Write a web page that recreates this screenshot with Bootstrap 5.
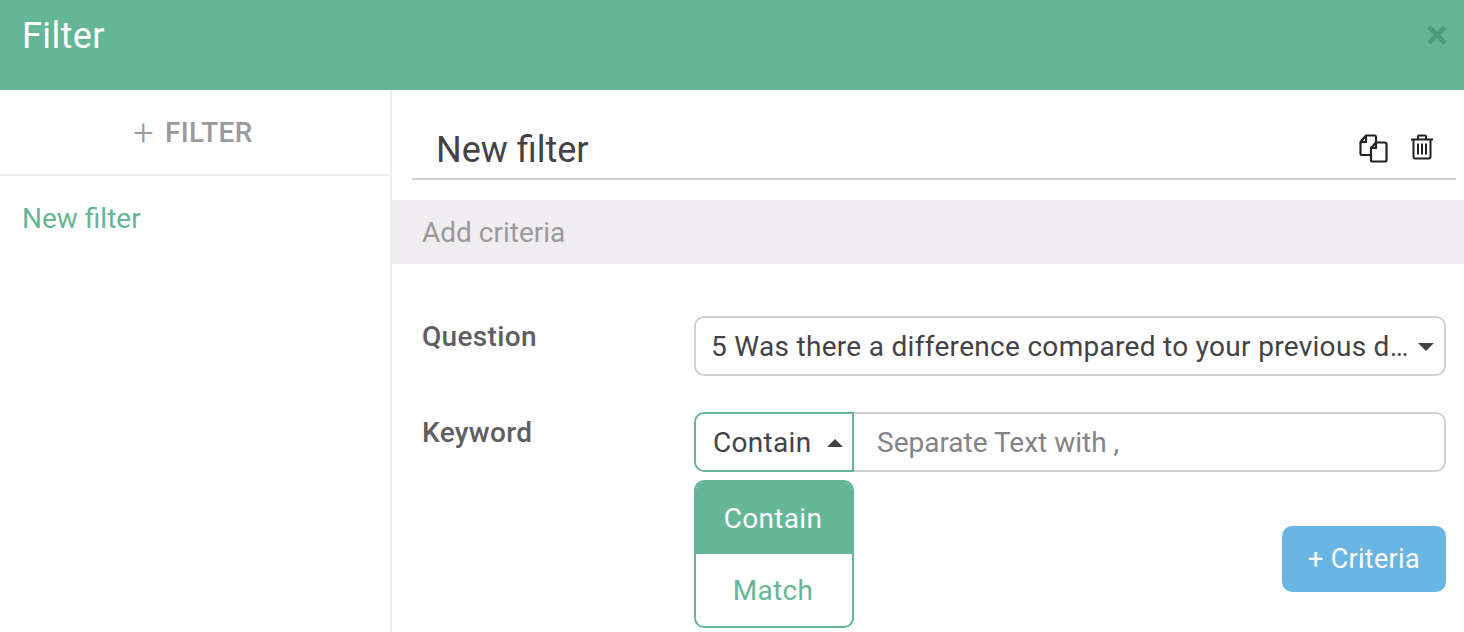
<!DOCTYPE html>
<html lang="en">
<head>
  <meta charset="UTF-8">
  <meta name="viewport" content="width=device-width, initial-scale=1.0">
  <title>Filter</title>
  <link href="https://cdn.jsdelivr.net/npm/bootstrap@5.3.2/dist/css/bootstrap.min.css" rel="stylesheet">
  <style>
    html, body { height: 100%; overflow: hidden; }
    body { font-family: Roboto, "Liberation Sans", sans-serif; color: #444246; background: #fff; }
    .filter-header { height: 90px; background: #65b696; color: #fff; padding: 15px 17px 0 22px; }
    .filter-header h1 { font-size: 36px; font-weight: 400; margin: 0; line-height: 42px; letter-spacing: .4px; }
    .btn-x { background: none; border: 0; padding: 0; line-height: 0; margin-top: 10px; }
    .main { height: 542px; }
    .side { width: 392px; border-right: 2px solid #efedf0; flex: none; }
    .side-add { height: 86px; border-bottom: 2px solid #efedf0; color: #9b999d; font-size: 28px; font-weight: 500; padding: 2px 4px 0 0; letter-spacing: .4px; }
    .side-add span.plus { font-weight: 300; font-size: 36px; line-height: 1; margin-right: 11px; }
    .side-item { color: #65b696; font-size: 28px; padding: 25px 22px; line-height: 36px; }
    .content { min-width: 0; }
    .title-row { height: 90px; margin: 0 8px 0 20px; border-bottom: 2px solid #d1d0d2; padding: 0 22px 0 24px; }
    .title-row div.name { font-size: 36px; line-height: 42px; padding-top: 39px; }
    .title-icons { padding-top: 44px; }
    .trash { margin-left: 6px; }
    .crit-band { margin-top: 20px; height: 64px; background: #efedf0; color: #9b999d; font-size: 28px; padding: 0 30px; line-height: 66px; }
    .form-area { padding: 52px 18px 0 30px; }
    .lbl { width: 272px; flex: none; font-size: 28px; font-weight: 500; color: #605e62; line-height: 42px; letter-spacing: .33px; }
    .q-select { height: 60px; border: 2px solid #d1d0d2; border-radius: 10px; font-size: 28px; padding: 2px 10px 0 15px; letter-spacing: .3px; min-width: 0; }
    .q-select .txt { white-space: nowrap; overflow: hidden; text-overflow: ellipsis; min-width: 0; }
    .caret-d, .caret-u { width: 0; height: 0; border-left: 8px solid transparent; border-right: 8px solid transparent; flex: none; }
    .caret-d { border-top: 8px solid #444246; margin-left: 4px; }
    .caret-u { border-bottom: 8px solid #444246; margin-left: 16px; }
    .kw-type { width: 160px; height: 60px; border: 2px solid #65b696; border-radius: 10px 0 0 10px; padding: 2px 9px 0 17px; font-size: 28px; flex: none; letter-spacing: .3px; }
    .kw-input { height: 60px; border: 2px solid #d1d0d2; border-left: 0; border-radius: 0 10px 10px 0; font-size: 28px; padding: 0 23px; color: #444246; outline: 0; min-width: 0; }
    .kw-input::placeholder { color: #858387; opacity: 1; }
    .kw-menu { position: absolute; top: 68px; left: 0; width: 160px; border: 2px solid #65b696; border-radius: 10px; overflow: hidden; background: #fff; font-size: 28px; text-align: center; letter-spacing: .3px; }
    .kw-menu div { height: 72px; line-height: 74px; color: #65b696; padding-right: 2px; }
    .kw-menu div.active { background: #65b696; color: #fff; }
    .btn-criteria { width: 164px; height: 66px; background: #69b6e5; color: #fff; border: 0; border-radius: 10px; font-size: 27px; padding: 0; letter-spacing: .3px; }
    .btn-criteria:hover { background: #69b6e5; color: #fff; }
    .row-gap { margin-top: 36px; }
    .btn-row { margin-top: 54px; }
  </style>
</head>
<body>
  <div class="filter-header d-flex justify-content-between align-items-start">
    <h1>Filter</h1>
    <button class="btn-x" type="button" aria-label="Close">
      <svg width="20" height="20" viewBox="0 0 20 20"><path d="M2 2 18 18M18 2 2 18" stroke="#4f9a7d" stroke-width="5" fill="none"/></svg>
    </button>
  </div>

  <div class="main d-flex">
    <div class="side">
      <div class="side-add d-flex justify-content-center align-items-center"><span class="plus">+</span>FILTER</div>
      <div class="side-item">New filter</div>
    </div>

    <div class="content flex-grow-1">
      <div class="title-row d-flex justify-content-between">
        <div class="name">New filter</div>
        <div class="title-icons d-flex align-items-start gap-3">
          <svg width="30" height="30" viewBox="0 0 30 30" fill="none" stroke="#222" stroke-width="2.200" stroke-linejoin="round">
            <path d="M2.500 8 8 1.500H16.500Q18 1.500 18 3V8M12 21H4Q2.500 21 2.500 19.500V8H8V1.500"/>
            <path d="M18 8.500H27Q28.500 8.500 28.500 10V26Q28.500 27.500 27 27.500H14.500Q13 27.500 13 26V14L18 8.500V14H13" fill="#fff"/>
          </svg>
          <svg class="trash" width="24" height="26" viewBox="0 0 24 26" fill="none" stroke="#222" stroke-width="2">
            <path d="M1 5.500H23M8 5V2.500Q8 1.500 9 1.500H15Q16 1.500 16 2.500V5M3.500 5.500V22.500Q3.500 24.500 5.500 24.500H18.500Q20.500 24.500 20.500 22.500V5.500"/>
            <path d="M8 9.500V20.500M12 9.500V20.500M16 9.500V20.500"/>
          </svg>
        </div>
      </div>

      <div class="crit-band">Add criteria</div>

      <div class="form-area">
        <div class="d-flex">
          <div class="lbl">Question</div>
          <div class="q-select flex-grow-1 d-flex align-items-center justify-content-between">
            <span class="txt">5 Was there a difference compared to your previous day's meal?</span>
            <span class="caret-d"></span>
          </div>
        </div>
        <div class="d-flex row-gap">
          <div class="lbl">Keyword</div>
          <div class="flex-grow-1 d-flex position-relative" style="min-width:0">
            <div class="kw-type d-flex align-items-center justify-content-between">Contain<span class="caret-u"></span></div>
            <input class="kw-input flex-grow-1" type="text" placeholder="Separate Text with ,">
            <div class="kw-menu">
              <div class="active">Contain</div>
              <div>Match</div>
            </div>
          </div>
        </div>
        <div class="d-flex justify-content-end btn-row">
          <button class="btn btn-criteria" type="button">+ Criteria</button>
        </div>
      </div>
    </div>
  </div>

  <script src="https://cdn.jsdelivr.net/npm/bootstrap@5.3.2/dist/js/bootstrap.bundle.min.js"></script>
</body>
</html>
